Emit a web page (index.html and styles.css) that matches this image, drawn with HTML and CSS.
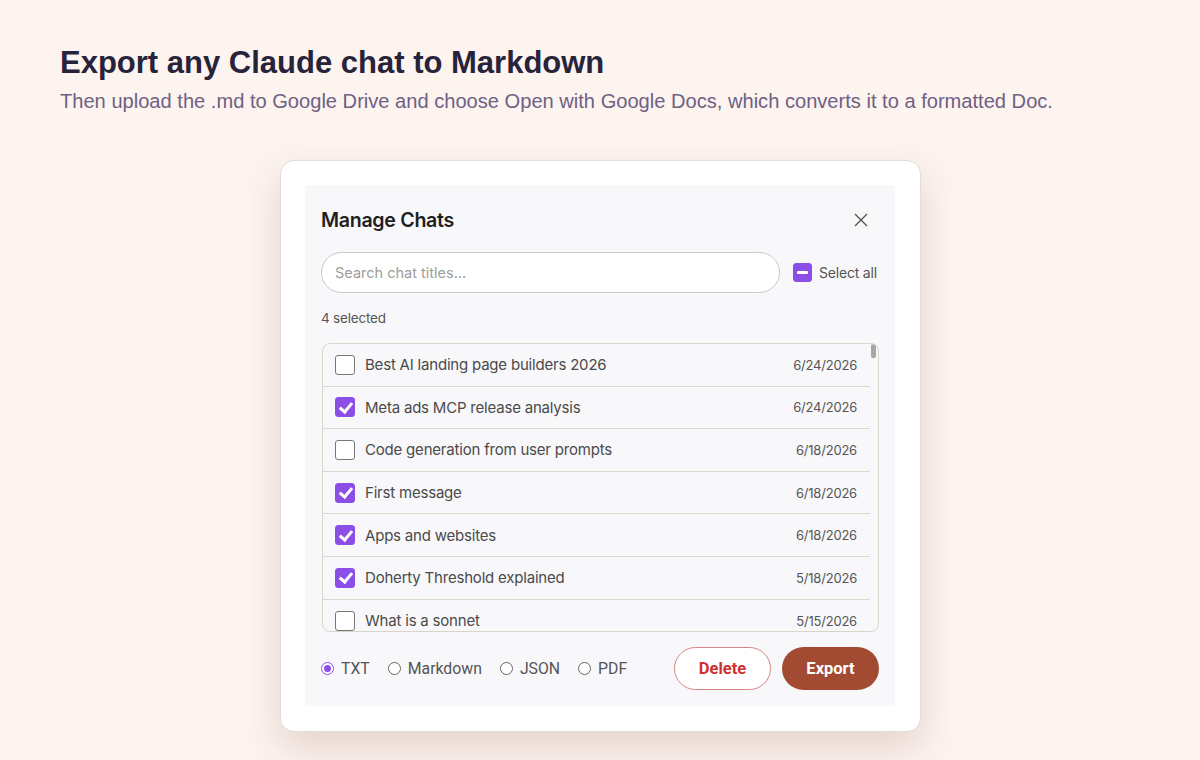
FILE: index.html
```html
<!DOCTYPE html>
<html lang="en">
<head>
    <meta charset="UTF-8">
    <meta name="viewport" content="width=device-width, initial-scale=1.0">
    <title>Export Claude chats</title>
    <link rel="stylesheet" href="styles.css">
</head>
<body>
    <!-- Cabeçalho da página -->
    <header class="intro">
        <h1>Export any Claude chat to Markdown</h1>
        <p>Then upload the .md to Google Drive and choose Open with Google Docs, which converts it to a formatted Doc.</p>
    </header>

    <div class="frame">
        <div class="dialog">
            <div class="dialog-head">
                <h2>Manage Chats</h2>
                <button class="close" aria-label="Close">
                    <svg width="14" height="14" viewBox="0 0 14 14"><path d="M1 1 L13 13 M13 1 L1 13" stroke="#555" stroke-width="1.4" fill="none"/></svg>
                </button>
            </div>

            <div class="toolbar">
                <input class="search" type="text" placeholder="Search chat titles...">
                <label class="select-all">
                    <span class="box partial"><span class="dash"></span></span>
                    Select all
                </label>
            </div>

            <div class="count">4 selected</div>

            <div class="chat-list">
                <div class="rows">
                    <div class="row"><span class="box"></span><span class="title">Best AI landing page builders 2026</span><span class="date">6/24/2026</span></div>
                    <div class="row"><span class="box checked"></span><span class="title">Meta ads MCP release analysis</span><span class="date">6/24/2026</span></div>
                    <div class="row"><span class="box"></span><span class="title">Code generation from user prompts</span><span class="date">6/18/2026</span></div>
                    <div class="row"><span class="box checked"></span><span class="title">First message</span><span class="date">6/18/2026</span></div>
                    <div class="row"><span class="box checked"></span><span class="title">Apps and websites</span><span class="date">6/18/2026</span></div>
                    <div class="row"><span class="box checked"></span><span class="title">Doherty Threshold explained</span><span class="date">5/18/2026</span></div>
                    <div class="row"><span class="box"></span><span class="title">What is a sonnet</span><span class="date">5/15/2026</span></div>
                </div>
                <div class="scrollbar"><div class="thumb"></div></div>
            </div>

            <div class="dialog-foot">
                <div class="formats">
                    <label class="radio"><span class="dot on"></span>TXT</label>
                    <label class="radio"><span class="dot"></span>Markdown</label>
                    <label class="radio"><span class="dot"></span>JSON</label>
                    <label class="radio"><span class="dot"></span>PDF</label>
                </div>
                <div class="actions">
                    <button class="btn btn-delete">Delete</button>
                    <button class="btn btn-export">Export</button>
                </div>
            </div>
        </div>
    </div>
</body>
</html>
```

FILE: styles.css
```css
/* Reset */
* {
    margin: 0;
    padding: 0;
    box-sizing: border-box;
}

body {
    font-family: "Liberation Sans", Arial, sans-serif;
    background-color: #fdf3ef;
    width: 1200px;
    height: 760px;
    overflow: hidden;
    padding: 45px 60px 0;
}

/* Cabeçalho */
.intro h1 {
    font-size: 31px;
    font-weight: bold;
    color: #27233a;
    line-height: 36px;
}

.intro p {
    font-size: 20.1px;
    color: #6e6184;
    margin-top: 8px;
    line-height: 24px;
}

/* Moldura branca */
.frame {
    width: 641px;
    margin: 47px 0 0 220px;
    background: #ffffff;
    border: 1px solid #e3dcd8;
    border-radius: 14px;
    padding: 24px 25px 25px 24px;
    box-shadow: 0 16px 36px rgba(120, 70, 50, 0.18);
}

.dialog {
    background: #f8f8fa;
    padding: 19px 16px 16px 16px;
    font-family: Inter, "Noto Sans", sans-serif;
    color: #444;
}

.dialog-head {
    display: flex;
    justify-content: space-between;
    align-items: center;
    height: 32px;
}

.dialog-head h2 {
    font-size: 19.6px;
    font-weight: 600;
    color: #1f1f1f;
    letter-spacing: -0.3px;
}

.close {
    border: none;
    background: none;
    width: 24px;
    height: 24px;
    display: flex;
    align-items: center;
    justify-content: center;
    margin-right: 6px;
}

/* Barra de busca */
.toolbar {
    display: flex;
    align-items: center;
    margin-top: 16px;
}

.search {
    width: 459px;
    height: 41px;
    border: 1px solid #c9c9cf;
    border-radius: 21px;
    background: #fff;
    padding: 0 13px;
    font-family: Inter, sans-serif;
    font-size: 14.5px;
    outline: none;
}

.search::placeholder {
    color: #9d9d9d;
}

.select-all {
    display: flex;
    align-items: center;
    gap: 7px;
    margin-left: 13px;
    font-size: 14px;
    color: #555;
    letter-spacing: -0.2px;
}

.box {
    width: 20px;
    height: 20px;
    border: 1.5px solid #777;
    border-radius: 3px;
    background: #fff;
    flex-shrink: 0;
    position: relative;
}

.box.partial {
    width: 19px;
    height: 19px;
    background: #8b4fe8;
    border-color: #8b4fe8;
    display: flex;
    align-items: center;
    justify-content: center;
}

.dash {
    width: 11px;
    height: 3px;
    background: #fff;
    border-radius: 1px;
}

.box.checked {
    background: #8b4fe8;
    border-color: #8b4fe8;
}

/* Marca de seleção */
.box.checked::after {
    content: "";
    position: absolute;
    left: 5.5px;
    top: 1.5px;
    width: 5px;
    height: 10px;
    border: solid #fff;
    border-width: 0 3px 3px 0;
    transform: rotate(40deg);
}

.count {
    font-size: 13.5px;
    color: #555;
    margin-top: 17px;
    letter-spacing: -0.2px;
}

/* Lista de chats */
.chat-list {
    margin-top: 17px;
    margin-left: 1px;
    height: 289px;
    border: 1px solid #d9d5c9;
    border-radius: 8px;
    overflow: hidden;
    display: flex;
    background: #f8f8fa;
}

.rows {
    flex: 1;
}

.row {
    display: flex;
    align-items: center;
    height: 42.6px;
    border-bottom: 1.5px solid #dcd8cc;
    padding: 0 13px 0 12px;
}

.row:last-child {
    border-bottom: none;
}

.row .title {
    flex: 1;
    margin-left: 10px;
    font-size: 15px;
    color: #4a4a4a;
    letter-spacing: -0.2px;
}

.row .date {
    font-size: 13px;
    color: #555;
    letter-spacing: -0.2px;
}

.scrollbar {
    width: 8px;
    padding-left: 1px;
}

.thumb {
    width: 5px;
    height: 14px;
    background: #a6a6a6;
    border-radius: 2px;
}

/* Rodapé */
.dialog-foot {
    display: flex;
    justify-content: space-between;
    align-items: center;
    margin-top: 15px;
}

.formats {
    display: flex;
    gap: 18px;
    font-family: Roboto, sans-serif;
    font-size: 15.8px;
    color: #555;
}

.radio {
    display: flex;
    align-items: center;
    gap: 7px;
}

.dot {
    width: 13px;
    height: 13px;
    border: 1px solid #666;
    border-radius: 50%;
    background: #fff;
    position: relative;
}

.dot.on {
    border-color: #8b4fe8;
}

.dot.on::after {
    content: "";
    position: absolute;
    left: 2px;
    top: 2px;
    width: 7px;
    height: 7px;
    border-radius: 50%;
    background: #8b4fe8;
}

.actions {
    display: flex;
    gap: 11px;
}

.btn {
    width: 97px;
    height: 43px;
    border-radius: 22px;
    font-family: Roboto, sans-serif;
    font-size: 16.5px;
    font-weight: bold;
}

.btn-delete {
    background: #fff;
    border: 1px solid #d98484;
    color: #d0302f;
}

.btn-export {
    background: #a34a33;
    border: none;
    color: #fff;
}
```
